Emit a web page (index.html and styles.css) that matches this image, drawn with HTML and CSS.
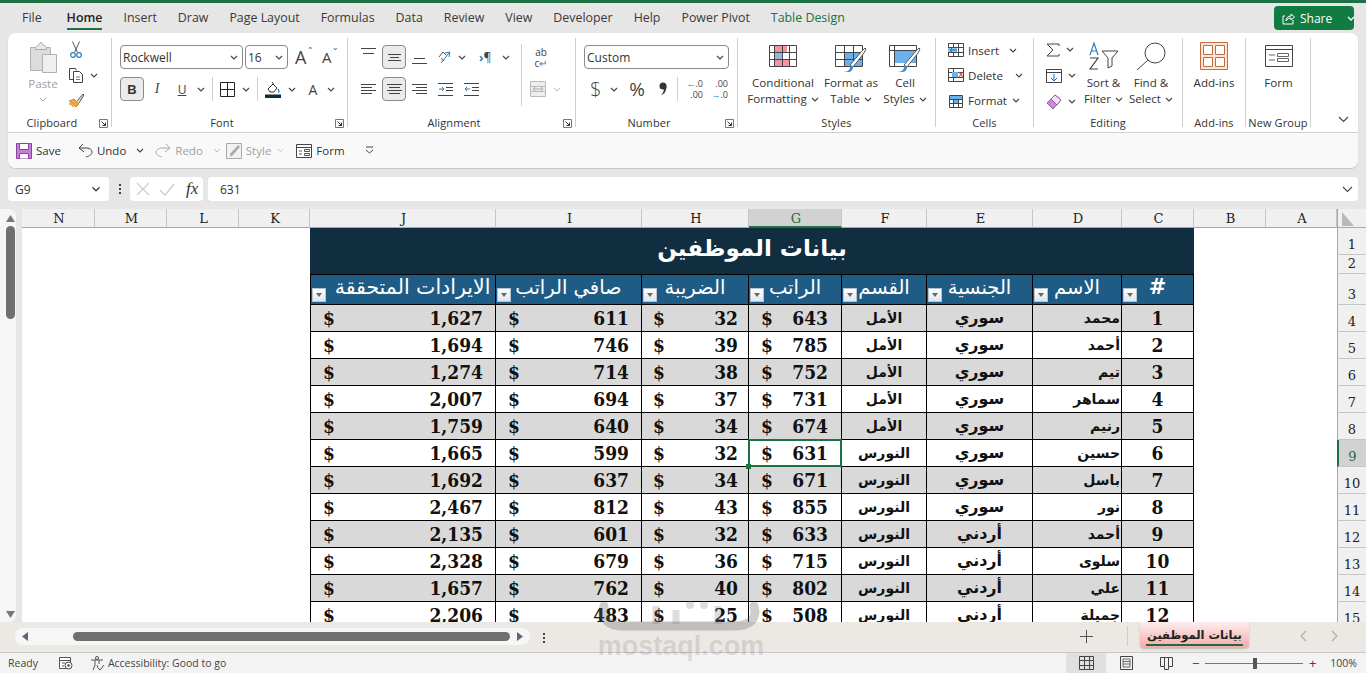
FILE: index.html
```html
<!DOCTYPE html>
<html lang="en">
<head>
<meta charset="utf-8">
<title>Excel</title>
<link rel="stylesheet" href="styles.css">
</head>
<body>
<svg class="defs" aria-hidden="true">
  <symbol id="chev" viewBox="0 0 8 5"><path d="M1 1l3 3 3-3" fill="none" stroke="#444" stroke-width="1.1"/></symbol>
  <symbol id="launch" viewBox="0 0 9 9"><path d="M.5 8.500v-8h8v8z" fill="none" stroke="#777"/><path d="M2.500 2.500l4 4M3.500 6.500h3v-3" fill="none" stroke="#333"/></symbol>
</svg>
<div class="topline"></div>
<header class="tabbar">
  <nav class="tabs">
    <span>File</span><span class="on">Home</span><span>Insert</span><span>Draw</span><span>Page Layout</span><span>Formulas</span><span>Data</span><span>Review</span><span>View</span><span>Developer</span><span>Help</span><span>Power Pivot</span><span class="ctx">Table Design</span>
  </nav>
  <div class="share">
    <svg width="13" height="13" viewBox="0 0 13 13"><path d="M3 4H1v8h10V8M4 9c0-3 2-5 5-5V2l3.500 3L9 8V6C7 6 5 7 4 9z" fill="none" stroke="#fff"/></svg>
    <span>Share</span>
    <svg class="share-chev" width="8" height="5" viewBox="0 0 8 5"><path d="M1 1l3 3 3-3" fill="none" stroke="#fff" stroke-width="1.3"/></svg>
  </div>
</header>

<section class="ribbon">
  <div class="ribbon-main">
    <div class="group g-clip lnch">
      <div class="gbody clip-body">
        <div class="paste">
          <svg width="28" height="31" viewBox="0 0 28 31"><path d="M1.500 5.500h20v23h-20z" fill="#dcdcdc" stroke="#b0b0b0"/><path d="M6.500 5.500l2-2h1l2-3h1l2 3h1l2 2v2h-11z" fill="#e8e8e8" stroke="#aaa"/><path d="M13.500 12.500h14v18h-14z" fill="#efefef" stroke="#b0b0b0"/></svg>
          <span class="dim">Paste</span>
          <svg class="ch" viewBox="0 0 8 5"><path d="M1 1l3 3 3-3" fill="none" stroke="#aaa"/></svg>
        </div>
        <div class="clip-tools">
          <div class="tool tool-cut"><svg width="12" height="17" viewBox="0 0 12 17"><path d="M2.500 .5l5 11M9.500 .5l-5 11" fill="none" stroke="#555"/><circle cx="3" cy="14" r="2.300" fill="none" stroke="#2d7fb8" stroke-width="1.200"/><circle cx="9" cy="14" r="2.300" fill="none" stroke="#2d7fb8" stroke-width="1.200"/></svg></div>
          <div class="tool tool-copy"><svg width="16" height="16" viewBox="0 0 16 16"><path d="M5.500 12.500h-4v-11h6l1 2" fill="none" stroke="#444"/><path d="M5.500 4.500h6l3 3v8h-9z" fill="#fff" stroke="#444"/><path d="M8 10h4M8 12.500h4" stroke="#777"/></svg><svg class="ch" viewBox="0 0 8 5"><use href="#chev"/></svg></div>
          <div class="tool tool-brush"><svg width="17" height="16" viewBox="0 0 17 16"><path d="M1 8l7 6 3-3-5-5z" fill="#f0a63c" stroke="#c77a1a" stroke-width=".8"/><path d="M3 10l-2 1 3 1 1 2 1-1" fill="#f6c26b" stroke="#c77a1a" stroke-width=".6"/><path d="M9 8l6-7 1 1-5 8" fill="#ddd" stroke="#555"/></svg></div>
        </div>
      </div>
      <div class="glabel">Clipboard</div>
      <svg class="launcher" viewBox="0 0 9 9"><use href="#launch"/></svg>
    </div>

    <div class="group g-font lnch">
      <div class="gbody stack">
        <div class="frow font-r1">
          <div class="select sel-font"><span>Rockwell</span><svg class="ch" viewBox="0 0 8 5"><use href="#chev"/></svg></div>
          <div class="select sel-size"><span>16</span><svg class="ch" viewBox="0 0 8 5"><use href="#chev"/></svg></div>
          <div class="bigA">A<i>ˆ</i></div>
          <div class="smallA">A<i>ˇ</i></div>
        </div>
        <div class="frow font-r2">
          <div class="btn-on bold">B</div>
          <div class="fi italic">I</div>
          <div class="fi under">U</div>
          <svg class="ch" viewBox="0 0 8 5"><use href="#chev"/></svg>
          <b class="vsep"></b>
          <svg width="15" height="15" viewBox="0 0 15 15"><path d="M.5.500h14v14H.5zM7.500.500v14M.5 7.500h14" fill="none" stroke="#222"/></svg>
          <svg class="ch" viewBox="0 0 8 5"><use href="#chev"/></svg>
          <b class="vsep"></b>
          <svg width="16" height="17" viewBox="0 0 16 17"><path d="M3 8l5-5 4 4-3 4H5z" fill="#fff" stroke="#333"/><path d="M7 1l2 3" stroke="#333"/><path d="M13 8c1 2 1.500 3 0 3.500" fill="none" stroke="#2d7fb8" stroke-width="1.300"/><path d="M0 13.500h16V17H0z" fill="#0f2d40"/></svg>
          <svg class="ch" viewBox="0 0 8 5"><use href="#chev"/></svg>
          <div class="fi fontA">A</div>
          <svg class="ch" viewBox="0 0 8 5"><use href="#chev"/></svg>
        </div>
      </div>
      <div class="glabel">Font</div>
      <svg class="launcher" viewBox="0 0 9 9"><use href="#launch"/></svg>
    </div>

    <div class="group g-align lnch">
      <div class="gbody stack">
        <div class="frow align-r1">
          <svg class="al" viewBox="0 0 15 13"><path d="M0 .5h15M2 5.500h11" stroke="#444"/></svg>
          <div class="btn-on"><svg class="al" viewBox="0 0 15 13"><path d="M1 3.500h13M3 6.500h9M1 9.500h13" stroke="#444"/></svg></div>
          <svg class="al al-low" viewBox="0 0 15 13"><path d="M2 6.500h11M0 11.500h15" stroke="#444"/></svg>
          <svg width="16" height="14" viewBox="0 0 16 14"><path d="M3 13l8-10" stroke="#2d7fb8"/><path d="M7 3l5-1-1 5" fill="none" stroke="#2d7fb8"/><path d="M1 7l4-5 3 3M3 8l3 3" fill="none" stroke="#555"/></svg>
          <svg class="ch" viewBox="0 0 8 5"><use href="#chev"/></svg>
          <span class="para"><em>›</em>¶</span>
          <svg class="ch" viewBox="0 0 8 5"><use href="#chev"/></svg>
          <b class="vsep tall"></b>
          <div class="wrap"><span>ab</span><span>c<em>↵</em></span></div>
        </div>
        <div class="frow align-r2">
          <svg class="al" viewBox="0 0 15 13"><path d="M0 1.500h15M0 4.500h11M0 7.500h15M0 10.500h11" stroke="#444"/></svg>
          <div class="btn-on"><svg class="al" viewBox="0 0 15 13"><path d="M0 1.500h15M2 4.500h11M0 7.500h15M2 10.500h11" stroke="#444"/></svg></div>
          <svg class="al" viewBox="0 0 15 13"><path d="M0 1.500h15M4 4.500h11M0 7.500h15M4 10.500h11" stroke="#444"/></svg>
          <svg class="al" viewBox="0 0 15 13"><path d="M0 .5h15M8 4.500h7M8 7.500h7M0 12.500h15" stroke="#444"/><path d="M1 6h5M4 4l2 2-2 2" fill="none" stroke="#2d7fb8"/></svg>
          <svg class="al" viewBox="0 0 15 13"><path d="M0 .5h15M8 4.500h7M8 7.500h7M0 12.500h15" stroke="#444"/><path d="M6 6H1M3 4L1 6l2 2" fill="none" stroke="#2d7fb8"/></svg>
          <svg class="merge" width="16" height="16" viewBox="0 0 16 16"><path d="M.5.500h15v15H.5zM.5 5.500h15M.5 10.500h15" fill="#eee" stroke="#bbb"/><path d="M3 8h10M5 6L3 8l2 2M11 6l2 2-2 2" fill="none" stroke="#aaa"/></svg>
          <svg class="ch" viewBox="0 0 8 5"><path d="M1 1l3 3 3-3" fill="none" stroke="#bbb"/></svg>
        </div>
      </div>
      <div class="glabel">Alignment</div>
      <svg class="launcher" viewBox="0 0 9 9"><use href="#launch"/></svg>
    </div>

    <div class="group g-num lnch">
      <div class="gbody stack">
        <div class="frow"><div class="select sel-num"><span>Custom</span><svg class="ch" viewBox="0 0 8 5"><use href="#chev"/></svg></div></div>
        <div class="frow num-r2">
          <span class="dollar">$</span>
          <svg class="ch" viewBox="0 0 8 5"><use href="#chev"/></svg>
          <span class="pct">%</span>
          <svg class="comma" width="8" height="14" viewBox="0 0 8 14"><circle cx="4" cy="4" r="3.500" fill="#333"/><path d="M7.500 4c0 5-2 8-5.500 9.500C4 11 5 9 5 6z" fill="#333"/></svg>
          <b class="vsep"></b>
          <div class="dec"><span><em>←</em>.0</span><span>.00</span></div>
          <div class="dec"><span>.00</span><span><em>→</em>.0</span></div>
        </div>
      </div>
      <div class="glabel">Number</div>
      <svg class="launcher" viewBox="0 0 9 9"><use href="#launch"/></svg>
    </div>

    <div class="group g-styles">
      <div class="gbody bigs">
        <div class="big b-cond low">
          <svg width="28" height="22" viewBox="0 0 28 22"><path d="M5 0h13v7H5z" fill="#f4939b"/><path d="M5 7h9v7H5z" fill="#8db8e8"/><path d="M5 14h15v8H5z" fill="#f4939b"/><path d="M.5.500h27v21H.5zM.5 7.500h27M.5 14.500h27M5.500.500v21M13.500.500v21M20.500.500v21" fill="none" stroke="#444"/></svg>
          <span>Conditional</span><span>Formatting <svg class="ch" viewBox="0 0 8 5"><use href="#chev"/></svg></span>
        </div>
        <div class="big b-fmt low">
          <svg width="32" height="28" viewBox="0 0 32 28"><path d="M10 7h18v14H10z" fill="#6db0ee"/><path d="M.5.500h27v21H.5zM.5 7.500h27M.5 14.500h27M9.500.500v21M18.500.500v21" fill="none" stroke="#444"/><path d="M15 20l12-14 3-3 1 1-2 4-11 14z" fill="#fff" stroke="#555"/><path d="M8 27c3 0 5-1 6-2s1-3 1-5l3 2c0 3-2 5-5 5z" fill="#3f8dcc"/></svg>
          <span>Format as</span><span>Table <svg class="ch" viewBox="0 0 8 5"><use href="#chev"/></svg></span>
        </div>
        <div class="big b-cell low">
          <svg width="32" height="28" viewBox="0 0 32 28"><path d="M5 5h23v13H5z" fill="#6db0ee"/><path d="M.5.500h27v21H.5zM.5 5.500h27M5.500.500v21" fill="none" stroke="#444"/><path d="M15 20l12-14 3-3 1 1-2 4-11 14z" fill="#fff" stroke="#555"/><path d="M8 27c3 0 5-1 6-2s1-3 1-5l3 2c0 3-2 5-5 5z" fill="#3f8dcc"/></svg>
          <span>Cell</span><span>Styles <svg class="ch" viewBox="0 0 8 5"><use href="#chev"/></svg></span>
        </div>
      </div>
      <div class="glabel">Styles</div>
    </div>

    <div class="group g-cells">
      <div class="gbody cells-body">
        <div class="cellrow c-ins"><svg width="16" height="14" viewBox="0 0 16 14"><path d="M.5.500h15v13H.5zM.5 4.500h15M.5 9.500h15M5.500.500v13M10.500.500v13" fill="#fff" stroke="#444"/><path d="M0 5h9v4H0z" fill="#8cc4f0"/><path d="M9 7H2M4 5L2 7l2 2" fill="none" stroke="#1f6fb0"/></svg><span>Insert</span><svg class="ch" viewBox="0 0 8 5"><use href="#chev"/></svg></div>
        <div class="cellrow c-del"><svg width="16" height="14" viewBox="0 0 16 14"><path d="M.5.500h15v13H.5zM.5 4.500h15M.5 9.500h15M5.500.500v13" fill="#fff" stroke="#444"/><path d="M4 4h6v5H4z" fill="#6db0ee"/><path d="M11 4l4 5M15 4l-4 5" stroke="#d8473c" stroke-width="1.200"/></svg><span>Delete</span><svg class="ch" viewBox="0 0 8 5"><use href="#chev"/></svg></div>
        <div class="cellrow c-fmt"><svg width="16" height="16" viewBox="0 0 16 16"><path d="M1.500 3.500h13v12h-13zM1.500 7.500h13M1.500 11.500h13M5.500 3.500v12M10.500 3.500v12" fill="#fff" stroke="#444"/><path d="M2 4h12v3H2zM6 8h4v3H6z" fill="#6db0ee"/></svg><span>Format</span><svg class="ch" viewBox="0 0 8 5"><use href="#chev"/></svg></div>
      </div>
      <div class="glabel">Cells</div>
    </div>

    <div class="group g-edit">
      <div class="gbody edit-body">
        <div class="edit-tools">
          <div class="tool"><svg width="14" height="14" viewBox="0 0 14 14"><path d="M13 3V1H1l6 6-6 6h12v-2" fill="none" stroke="#444"/></svg><svg class="ch" viewBox="0 0 8 5"><use href="#chev"/></svg></div>
          <div class="tool"><svg width="16" height="14" viewBox="0 0 16 14"><path d="M.5.500h15v13H.5zM.5 3.500h15" fill="#fff" stroke="#444"/><path d="M8 5v7M5 9l3 3 3-3" fill="none" stroke="#1f6fb0"/></svg><svg class="ch" viewBox="0 0 8 5"><use href="#chev"/></svg></div>
          <div class="tool"><svg width="16" height="16" viewBox="0 0 16 16"><path d="M1 9l8-8 6 5-8 9z" fill="#c98bd8" stroke="#9a56ad"/><path d="M9 1l6 5-4 5-6-6z" fill="#f1e1f5" stroke="#9a56ad"/></svg><svg class="ch" viewBox="0 0 8 5"><use href="#chev"/></svg></div>
        </div>
        <div class="big b-sort">
          <svg width="32" height="28" viewBox="0 0 32 28"><path d="M2 13L6 1l4 12M3.500 9h5" fill="none" stroke="#2d7fb8" stroke-width="1.200"/><path d="M2 16h8L2 27h8" fill="none" stroke="#444" stroke-width="1.200"/><path d="M14 9h16l-6 7v8l-4 2v-10z" fill="none" stroke="#444"/></svg>
          <span>Sort &amp;</span><span>Filter <svg class="ch" viewBox="0 0 8 5"><use href="#chev"/></svg></span>
        </div>
        <div class="big b-find">
          <svg width="30" height="29" viewBox="0 0 30 29"><circle cx="19" cy="11" r="10" fill="none" stroke="#444"/><path d="M12 18L1 28" stroke="#444"/></svg>
          <span>Find &amp;</span><span>Select <svg class="ch" viewBox="0 0 8 5"><use href="#chev"/></svg></span>
        </div>
      </div>
      <div class="glabel">Editing</div>
    </div>

    <div class="group g-add">
      <div class="gbody bigs">
        <div class="big b-add">
          <svg width="28" height="28" viewBox="0 0 28 28"><path d="M.5.500h27v27H.5z" fill="#fbe5d6" stroke="#c8693a"/><path d="M3.500 3.500h9v9h-9zM15.500 3.500h9v9h-9zM3.500 15.500h9v9h-9zM15.500 15.500h9v9h-9z" fill="#fff" stroke="#c8693a"/></svg>
          <span>Add-ins</span>
        </div>
      </div>
      <div class="glabel">Add-ins</div>
    </div>

    <div class="group g-new">
      <div class="gbody bigs">
        <div class="big b-form low">
          <svg width="28" height="22" viewBox="0 0 28 22"><path d="M.5.500h27v21H.5zM.5 4.500h27" fill="#fff" stroke="#444"/><path d="M4 10h6M4 15h6" stroke="#666"/><path d="M12.500 8.500h11v3h-11zM12.500 13.500h11v3h-11z" fill="#fff" stroke="#666"/></svg>
          <span>Form</span>
        </div>
      </div>
      <div class="glabel">New Group</div>
    </div>

    <svg class="collapse" width="11" height="7" viewBox="0 0 11 7"><path d="M1 1l4.500 4.500L10 1" fill="none" stroke="#444" stroke-width="1.100"/></svg>
  </div>

  <div class="qat">
    <div class="q q-save"><svg width="16" height="16" viewBox="0 0 16 16"><path d="M.5.500h15v15H.5z" fill="#c77fd6" stroke="#8d3fa3"/><path d="M3.500.500h9v6h-9z" fill="#fff" stroke="#8d3fa3"/><path d="M3.500 15.500v-5h9v5" fill="#fff" stroke="#8d3fa3"/></svg><span>Save</span></div>
    <div class="q q-undo"><svg width="15" height="15" viewBox="0 0 15 15"><path d="M5 1L1 5h8c3 0 5 2 5 4 0 2-2 4-6 5M1 5l5 4" fill="none" stroke="#444"/></svg><span>Undo</span><svg class="ch" viewBox="0 0 8 5"><use href="#chev"/></svg></div>
    <div class="q q-redo dim"><svg width="16" height="15" viewBox="0 0 16 15"><path d="M11 1l4 4H7C4 5 1 7 1 9c0 2 2 4 6 5M15 5l-5 4" fill="none" stroke="#aaa"/></svg><span>Redo</span><svg class="ch" viewBox="0 0 8 5"><path d="M1 1l3 3 3-3" fill="none" stroke="#bbb"/></svg></div>
    <div class="q q-style dim"><svg width="16" height="16" viewBox="0 0 16 16"><path d="M.5.500h15v15H.5z" fill="#f2f2f2" stroke="#aaa"/><path d="M5 14l9-10-2-2-8 9z" fill="#aaa"/></svg><span>Style</span><svg class="ch" viewBox="0 0 8 5"><path d="M1 1l3 3 3-3" fill="none" stroke="#bbb"/></svg></div>
    <div class="q q-form"><svg width="16" height="14" viewBox="0 0 16 14"><path d="M.5.500h15v13H.5zM.5 3.500h15" fill="#fff" stroke="#444"/><path d="M3 7h3M3 10h3" stroke="#555"/><path d="M8.500 5.500h5v2h-5zM8.500 9.500h5v2h-5z" fill="#fff" stroke="#555"/></svg><span>Form</span></div>
    <svg class="q-custom" width="9" height="9" viewBox="0 0 9 9"><path d="M1 1h7M1 4l3.500 3L8 4" fill="none" stroke="#444"/></svg>
  </div>
</section>

<section class="formula">
  <div class="namebox"><span>G9</span><svg class="ch" viewBox="0 0 8 5"><use href="#chev"/></svg></div>
  <div class="dots"><i></i><i></i><i></i></div>
  <div class="fbtns">
    <svg width="14" height="14" viewBox="0 0 14 14"><path d="M1 1l12 12M13 1L1 13" stroke="#ccc" stroke-width="1.200"/></svg>
    <svg width="16" height="13" viewBox="0 0 16 13"><path d="M1 7l5 5L15 1" fill="none" stroke="#ccc" stroke-width="1.200"/></svg>
    <span class="fx">fx</span>
  </div>
  <div class="finput"><span>631</span><svg class="fchev" width="11" height="7" viewBox="0 0 11 7"><path d="M1 1l4.500 4.500L10 1" fill="none" stroke="#444" stroke-width="1.100"/></svg></div>
</section>

<main class="workspace">
  <aside class="vscroll">
    <svg width="9" height="7" viewBox="0 0 9 7"><path d="M4.500 0L9 7H0z" fill="#777"/></svg>
    <div class="vthumb"></div>
    <svg class="vdown" width="9" height="7" viewBox="0 0 9 7"><path d="M4.500 7L9 0H0z" fill="#777"/></svg>
  </aside>
  <div class="sheet">
    <div class="ch-h">N</div><div class="ch-h">M</div><div class="ch-h">L</div><div class="ch-h">K</div><div class="ch-h">J</div><div class="ch-h">I</div><div class="ch-h">H</div><div class="ch-h sel">G</div><div class="ch-h">F</div><div class="ch-h">E</div><div class="ch-h">D</div><div class="ch-h">C</div><div class="ch-h">B</div><div class="ch-h">A</div>
    <div class="corner"><svg width="12" height="14" viewBox="0 0 12 14"><path d="M0 0l12 14H0z" fill="#b9b9b9"/></svg></div>

    <div class="blank-l"></div>
    <div class="blank-r"></div>
    <div class="title" dir="rtl">بيانات الموظفين</div>
    <div class="rh r1">1</div>
    <div class="rh r2">2</div>

    <div class="th first"><i class="flt"></i><span dir="rtl">الايرادات المتحققة</span></div>
    <div class="th"><i class="flt"></i><span dir="rtl">صافي الراتب</span></div>
    <div class="th"><i class="flt"></i><span dir="rtl">الضريبة</span></div>
    <div class="th"><i class="flt"></i><span dir="rtl">الراتب</span></div>
    <div class="th"><i class="flt"></i><span dir="rtl">القسم</span></div>
    <div class="th"><i class="flt"></i><span dir="rtl">الجنسية</span></div>
    <div class="th"><i class="flt"></i><span dir="rtl">الاسم</span></div>
    <div class="th hash"><i class="flt"></i><span>#</span></div>
    <div class="rh">3</div>

    <div class="c alt first n-j"><span>$</span><span>1,627</span></div><div class="c alt n-i"><span>$</span><span>611</span></div><div class="c alt n-h"><span>$</span><span>32</span></div><div class="c alt n-g"><span>$</span><span>643</span></div><div class="c alt dept" dir="rtl">الأمل</div><div class="c alt nat" dir="rtl">سوري</div><div class="c alt name" dir="rtl">محمد</div><div class="c alt idx">1</div><div class="rh">4</div>
    <div class="c first n-j"><span>$</span><span>1,694</span></div><div class="c n-i"><span>$</span><span>746</span></div><div class="c n-h"><span>$</span><span>39</span></div><div class="c n-g"><span>$</span><span>785</span></div><div class="c dept" dir="rtl">الأمل</div><div class="c nat" dir="rtl">سوري</div><div class="c name" dir="rtl">أحمد</div><div class="c idx">2</div><div class="rh">5</div>
    <div class="c alt first n-j"><span>$</span><span>1,274</span></div><div class="c alt n-i"><span>$</span><span>714</span></div><div class="c alt n-h"><span>$</span><span>38</span></div><div class="c alt n-g"><span>$</span><span>752</span></div><div class="c alt dept" dir="rtl">الأمل</div><div class="c alt nat" dir="rtl">سوري</div><div class="c alt name" dir="rtl">تيم</div><div class="c alt idx">3</div><div class="rh">6</div>
    <div class="c first n-j"><span>$</span><span>2,007</span></div><div class="c n-i"><span>$</span><span>694</span></div><div class="c n-h"><span>$</span><span>37</span></div><div class="c n-g"><span>$</span><span>731</span></div><div class="c dept" dir="rtl">الأمل</div><div class="c nat" dir="rtl">سوري</div><div class="c name" dir="rtl">سماهر</div><div class="c idx">4</div><div class="rh">7</div>
    <div class="c alt first n-j"><span>$</span><span>1,759</span></div><div class="c alt n-i"><span>$</span><span>640</span></div><div class="c alt n-h"><span>$</span><span>34</span></div><div class="c alt n-g"><span>$</span><span>674</span></div><div class="c alt dept" dir="rtl">الأمل</div><div class="c alt nat" dir="rtl">سوري</div><div class="c alt name" dir="rtl">رنيم</div><div class="c alt idx">5</div><div class="rh">8</div>
    <div class="c first n-j"><span>$</span><span>1,665</span></div><div class="c n-i"><span>$</span><span>599</span></div><div class="c n-h"><span>$</span><span>32</span></div><div class="c n-g active"><span>$</span><span>631</span></div><div class="c dept" dir="rtl">النورس</div><div class="c nat" dir="rtl">سوري</div><div class="c name" dir="rtl">حسين</div><div class="c idx">6</div><div class="rh sel">9</div>
    <div class="c alt first n-j"><span>$</span><span>1,692</span></div><div class="c alt n-i"><span>$</span><span>637</span></div><div class="c alt n-h"><span>$</span><span>34</span></div><div class="c alt n-g"><span>$</span><span>671</span></div><div class="c alt dept" dir="rtl">النورس</div><div class="c alt nat" dir="rtl">سوري</div><div class="c alt name" dir="rtl">باسل</div><div class="c alt idx">7</div><div class="rh">10</div>
    <div class="c first n-j"><span>$</span><span>2,467</span></div><div class="c n-i"><span>$</span><span>812</span></div><div class="c n-h"><span>$</span><span>43</span></div><div class="c n-g"><span>$</span><span>855</span></div><div class="c dept" dir="rtl">النورس</div><div class="c nat" dir="rtl">سوري</div><div class="c name" dir="rtl">نور</div><div class="c idx">8</div><div class="rh">11</div>
    <div class="c alt first n-j"><span>$</span><span>2,135</span></div><div class="c alt n-i"><span>$</span><span>601</span></div><div class="c alt n-h"><span>$</span><span>32</span></div><div class="c alt n-g"><span>$</span><span>633</span></div><div class="c alt dept" dir="rtl">النورس</div><div class="c alt nat" dir="rtl">أردني</div><div class="c alt name" dir="rtl">أحمد</div><div class="c alt idx">9</div><div class="rh">12</div>
    <div class="c first n-j"><span>$</span><span>2,328</span></div><div class="c n-i"><span>$</span><span>679</span></div><div class="c n-h"><span>$</span><span>36</span></div><div class="c n-g"><span>$</span><span>715</span></div><div class="c dept" dir="rtl">النورس</div><div class="c nat" dir="rtl">أردني</div><div class="c name" dir="rtl">سلوى</div><div class="c idx">10</div><div class="rh">13</div>
    <div class="c alt first n-j"><span>$</span><span>1,657</span></div><div class="c alt n-i"><span>$</span><span>762</span></div><div class="c alt n-h"><span>$</span><span>40</span></div><div class="c alt n-g"><span>$</span><span>802</span></div><div class="c alt dept" dir="rtl">النورس</div><div class="c alt nat" dir="rtl">أردني</div><div class="c alt name" dir="rtl">علي</div><div class="c alt idx">11</div><div class="rh">14</div>
    <div class="c first n-j"><span>$</span><span>2,206</span></div><div class="c n-i"><span>$</span><span>483</span></div><div class="c n-h"><span>$</span><span>25</span></div><div class="c n-g"><span>$</span><span>508</span></div><div class="c dept" dir="rtl">النورس</div><div class="c nat" dir="rtl">أردني</div><div class="c name" dir="rtl">جميلة</div><div class="c idx">12</div><div class="rh">15</div>
  </div>
</main>

<section class="sheetbar">
  <div class="hscroll">
    <svg width="6" height="9" viewBox="0 0 6 9"><path d="M0 4.500L6 0v9z" fill="#666"/></svg>
    <div class="hthumb"></div>
    <svg width="6" height="9" viewBox="0 0 6 9"><path d="M6 4.500L0 0v9z" fill="#666"/></svg>
  </div>
  <div class="dots sb-dots"><i></i><i></i><i></i></div>
  <svg class="plus" width="13" height="13" viewBox="0 0 13 13"><path d="M6.500 0v13M0 6.500h13" stroke="#555"/></svg>
  <b class="tabsep"></b>
  <div class="sheettab" dir="rtl"><span>بيانات الموظفين</span></div>
  <div class="sbnav">
    <svg width="8" height="12" viewBox="0 0 8 12"><path d="M7 1L2 6l5 5" fill="none" stroke="#aaa" stroke-width="1.100"/></svg>
    <svg width="8" height="12" viewBox="0 0 8 12"><path d="M1 1l5 5-5 5" fill="none" stroke="#aaa" stroke-width="1.100"/></svg>
  </div>
</section>

<footer class="status">
  <span class="ready">Ready</span>
  <svg class="st-ic" width="14" height="13" viewBox="0 0 14 13"><path d="M.5.500h11v11H.5zM.5 3.500h11M3 6h3M3 9h2" fill="#fff" stroke="#555"/><circle cx="9.500" cy="8.500" r="3.500" fill="#fff" stroke="#444"/><circle cx="9.500" cy="8.500" r="1.300" fill="#444"/></svg>
  <svg class="st-acc" width="15" height="15" viewBox="0 0 15 15"><circle cx="7" cy="2" r="1.500" fill="none" stroke="#555"/><path d="M1 4h12M5 4v5l-2 5M9 4v4M7 9l1 3 2 2 4-5" fill="none" stroke="#555"/></svg>
  <span class="acc">Accessibility: Good to go</span>
  <div class="views">
    <div class="view on"><svg width="15" height="14" viewBox="0 0 15 14"><path d="M.5.500h14v13H.5zM.5 4.500h14M.5 9.500h14M5.500.500v13M10.500.500v13" fill="none" stroke="#444"/></svg></div>
    <div class="view"><svg width="13" height="14" viewBox="0 0 13 14"><path d="M.5.500h12v13H.5z" fill="none" stroke="#444"/><path d="M3 3h7v8H3zM3 5.500h7M3 8h7" fill="none" stroke="#666"/></svg></div>
    <div class="view"><svg width="13" height="13" viewBox="0 0 13 13"><path d="M.5.500h12v9H8.500v3h-4v-3H.5zM4.500.500v9M8.500.500v9" fill="none" stroke="#444"/></svg></div>
  </div>
  <div class="zoomctl">
    <span class="zm">−</span>
    <div class="slider"><i></i></div>
    <span class="zm">+</span>
    <span class="pc">100%</span>
  </div>
</footer>

<div class="watermark">
  <svg width="170" height="34" viewBox="0 0 170 34"><path d="M8 8c-4 14 6 20 20 20h110c14 0 24-6 20-20" fill="none" stroke="#666" stroke-opacity=".32" stroke-width="9" stroke-linecap="round"/><circle cx="94" cy="7" r="4" fill="#777" fill-opacity=".25"/><circle cx="108" cy="7" r="4" fill="#777" fill-opacity=".25"/><path d="M60 26V8M80 26V12M122 26V8" stroke="#777" stroke-opacity=".25" stroke-width="7"/></svg>
  <span>mostaql.com</span>
</div>
</body>
</html>
```

FILE: styles.css
```css
* { box-sizing: border-box; }
html, body { margin: 0; height: 673px; overflow: hidden; }
body {
  position: relative;
  background: #e6e6e6;
  color: #333;
  font-family: "Open Sans", "Liberation Sans", sans-serif;
  font-size: 12px;
  display: flex;
  flex-direction: column;
}
.defs { display: none; }
svg { display: block; flex: none; }
.ch { width: 8px; height: 5px; display: inline-block; }
i, em, b { font-style: normal; }
.dim { color: #a0a0a0; }

.topline { height: 3px; background: #1d7145; }

/* tab strip */
.tabbar { height: 30px; display: flex; justify-content: space-between; align-items: center; padding: 0 12px 0 22px; }
.tabs { display: flex; gap: 21px; font-size: 12.400px; color: #3a3a3a; }
.tabs span { height: 30px; line-height: 30px; position: relative; white-space: nowrap; }
.tabs .on { color: #222; font-weight: 600; margin-left: 4px; }
.tabs .on::after { content: ""; position: absolute; left: 0; right: 0; bottom: 3px; height: 2px; background: #1d7145; }
.tabs .ctx { color: #1d7145; }
.share { width: 80px; height: 24px; background: #107c41; border-radius: 4px; color: #fff; display: flex; align-items: center; padding-left: 8px; gap: 5px; }
.share-chev { margin-left: 10px; }

/* ribbon */
.ribbon { margin: 0 8px; height: 135px; background: #fff; border-radius: 8px; box-shadow: 0 1px 1px #c4c4c4; display: flex; flex-direction: column; overflow: hidden; flex: none; }
.ribbon-main { height: 100px; display: flex; padding-top: 5px; border-bottom: 1px solid #d0d0d0; position: relative; }
.group { height: 89px; border-right: 1px solid #cfcfcf; position: relative; display: flex; flex-direction: column; flex: none; }
.gbody { height: 78px; flex: none; }
.glabel { text-align: center; font-size: 11px; line-height: 14px; color: #333; white-space: nowrap; letter-spacing: .1px; }
.lnch .glabel { padding-right: 15px; }
.launcher { position: absolute; width: 9px; height: 9px; right: 3px; bottom: -1px; }
.collapse { position: absolute; left: 1330px; top: 83px; }

.g-clip { width: 104px; }
.g-font { width: 236px; }
.g-align { width: 228px; }
.g-num { width: 162px; }
.g-styles { width: 198px; }
.g-cells { width: 98px; }
.g-edit { width: 149px; }
.g-add { width: 63px; }
.g-new { width: 65px; }

.clip-body { display: flex; padding: 4px 0 0 21px; }
.paste { width: 28px; display: flex; flex-direction: column; align-items: center; }
.paste span { margin-top: 3px; line-height: 16px; font-size: 11.500px; }
.paste .ch { margin-top: 5px; }
.clip-tools { display: flex; flex-direction: column; margin-left: 11px; gap: 10px; }
.tool { display: flex; align-items: center; gap: 6px; }
.tool-cut { margin-left: 2px; height: 16px; margin-top: -1px; }
.tool-copy { height: 16px; }
.tool-brush { height: 16px; }

.stack { padding: 7px 0 0 8px; display: flex; flex-direction: column; gap: 8px; }
.frow { display: flex; align-items: center; height: 24px; }
.select { height: 24px; border: 1px solid #8a8a8a; border-radius: 4px; display: flex; align-items: center; justify-content: space-between; padding: 0 4px 0 2px; color: #333; background: #fff; }
.sel-font { width: 123px; }
.sel-size { width: 43px; margin-left: 2px; }
.sel-num { width: 145px; }
.bigA { margin-left: 7px; width: 20px; font-size: 18px; color: #444; position: relative; }
.smallA { margin-left: 7px; width: 20px; font-size: 15px; color: #444; position: relative; }
.bigA i, .smallA i { position: absolute; left: 13px; top: -1px; font-size: 11px; color: #2d7fb8; }
.smallA i { left: 11px; top: -2px; }
.btn-on { width: 24px; height: 24px; background: #ebebeb; border: 1px solid #8a8a8a; border-radius: 4px; display: flex; align-items: center; justify-content: center; flex: none; }
.bold { font-family: "Liberation Sans", sans-serif; font-weight: 700; font-size: 13px; color: #333; }
.fi { text-align: center; flex: none; color: #444; }
.italic { width: 14px; margin-left: 6px; font-family: "Liberation Serif", serif; font-style: italic; font-size: 14px; }
.under { width: 12px; margin-left: 12px; text-decoration: underline; font-size: 12px; }
.font-r2 > .under + .ch { margin-left: 9px; }
.vsep { width: 1px; height: 24px; background: #d0d0d0; flex: none; }
.font-r2 > .vsep { margin: 0 7px; }
.font-r2 > svg + .ch { margin-left: 7px; }
.fontA { width: 14px; margin-left: 10px; font-size: 14px; }
.font-r2 > .fontA + .ch { margin-left: 7px; }

.al { width: 15px; height: 13px; flex: none; }
.al-low { margin-top: 2px; }
.align-r1 .btn-on, .align-r2 .btn-on { margin: 0 6px; }
.align-r1 > svg:first-child, .align-r2 > svg:first-child { margin-left: 5px; }
.align-r1 > .al:first-child { margin-top: -6px; }
.align-r1 > .al-low + svg { margin-left: 11px; }
.align-r1 > svg + .ch { margin-left: 4px; }
.para { margin-left: 13px; width: 16px; font-size: 12px; color: #444; white-space: nowrap; }
.para em { color: #2d7fb8; font-weight: 700; }
.para + .ch { margin-left: 7px; }
.align-r1 .vsep.tall { height: 62px; margin: -1px 9px 0 11px; align-self: flex-start; }
.wrap { width: 20px; display: flex; flex-direction: column; align-items: center; line-height: 11px; font-size: 10px; color: #444; margin-top: 1px; }
.wrap em { color: #2d7fb8; font-size: 10px; }
.align-r2 > .al + .al { margin-left: 11px; }
.merge { margin-left: 51px; }
.merge + .ch { margin-left: 7px; }

.num-r2 { padding-left: 6px; }
.dollar { font-size: 20px; width: 10px; color: #444; font-weight: 300; }
.num-r2 .ch { margin-left: 10px; }
.pct { font-size: 19px; margin-left: 8px; width: 22px; color: #444; text-align: center; }
.comma { margin: 0 4px 0 11px; }
.num-r2 .vsep { margin: 0 4px 0 6px; }
.dec { display: flex; flex-direction: column; font-size: 9px; line-height: 11px; width: 21px; margin-right: 4px; text-align: right; color: #444; white-space: nowrap; }
.dec em { color: #2d7fb8; font-size: 9px; }

.bigs { display: flex; padding-top: 4px; }
.big { display: grid; grid-template-rows: 33px 16px 16px; justify-items: center; line-height: 16px; white-space: nowrap; flex: none; font-size: 11.600px; }
.low > svg { margin-top: 3px; }
.big span .ch { margin-left: 1px; vertical-align: 1px; }
.b-cond { width: 72px; margin-left: 9px; }
.b-fmt { width: 64px; }
.b-cell { width: 44px; }
.b-add { width: 62px; }
.b-form { width: 65px; }
.b-sort { width: 49px; }
.b-find { width: 46px; }

.cells-body { display: flex; flex-direction: column; padding: 4px 0 0 12px; gap: 9px; }
.cellrow { display: flex; align-items: center; gap: 4px; height: 16px; font-size: 11.600px; }
.c-ins .ch { margin-left: 6px; }
.c-del .ch { margin-left: 8px; }
.c-fmt .ch { margin-left: 1px; }
.edit-body { display: flex; padding: 4px 0 0 12px; }
.edit-tools { display: flex; flex-direction: column; width: 33px; gap: 11px; }
.edit-tools .tool { height: 15px; gap: 6px; }

/* quick access */
.qat { flex: 1; background: #f9f9f9; display: flex; align-items: center; padding: 0 0 0 8px; }
.q { display: flex; align-items: center; gap: 4px; white-space: nowrap; font-size: 11.500px; }
.q-undo { margin-left: 17px; }
.q-undo .ch { margin-left: 6px; }
.q-redo { margin-left: 11px; }
.q-redo .ch { margin-left: 6px; }
.q-style { margin-left: 5px; }
.q-style .ch { margin-left: 2px; width: 7px; }
.q-form { margin-left: 12px; }
.q-custom { margin-left: 20px; }

/* formula bar */
.formula { height: 24px; margin: 9px 8px 8px; display: flex; flex: none; }
.namebox { width: 101px; background: #fff; border-radius: 4px; display: flex; align-items: center; justify-content: space-between; padding: 0 8px 0 7px; }
.namebox .ch { width: 10px; height: 6px; }
.dots { display: flex; flex-direction: column; gap: 2px; align-items: center; justify-content: center; width: 21px; }
.dots i { width: 2px; height: 2px; background: #444; }
.fbtns { width: 73px; background: #fff; border-radius: 4px; display: flex; align-items: center; padding-left: 6px; gap: 9px; }
.fx { font-family: "Liberation Serif", serif; font-style: italic; font-size: 17px; color: #333; margin-left: 2px; }
.finput { flex: 1; background: #fff; border-radius: 4px; margin-left: 5px; display: flex; align-items: center; justify-content: space-between; padding: 0 5px 0 12px; }

/* grid */
.workspace { height: 413px; display: flex; flex: none; background: #fff; }
.vscroll { width: 22px; background: #e6e6e6; flex: none; display: flex; flex-direction: column; align-items: center; padding: 6px 2px 0 0; position: relative; }
.vscroll::before { content: ""; position: absolute; inset: 0 6px 0 0; background: #f6f6f6; border-radius: 0 7px 7px 0; }
.vscroll svg, .vthumb { position: relative; }
.vthumb { width: 9px; height: 93px; background: #707070; border-radius: 5px; margin-top: 4px; }
.vdown { margin-top: auto; margin-bottom: 4px; }
.sheet {
  flex: 1;
  display: grid;
  grid-template-columns: 73px 72px 72px 71px 186px 146px 107px 93px 85px 106px 89px 72px 72px 71px 29px;
  grid-template-rows: 19px 27px 19px 31px repeat(12, 27px);
  overflow: hidden;
  position: relative;
  font-family: "DejaVu Serif", serif;
}
.ch-h { background: #f0f0f0; border-right: 1px solid #c6c6c6; border-bottom: 1px solid #a8a8a8; text-align: center; font-size: 13px; line-height: 20px; color: #222; overflow: hidden; padding-left: 2px; }
.ch-h.sel { background: #d2d2d2; color: #1d6b42; border-bottom: 2px solid #1d7145; }
.corner { background: #f0f0f0; border-bottom: 1px solid #a8a8a8; padding: 3px 0 0 4px; border-left: 1px solid #a8a8a8; }
.blank-l { grid-column: 1 / 5; grid-row: 2 / 17; background: #fff; }
.blank-r { grid-column: 13 / 15; grid-row: 2 / 17; background: #fff; }
.title { grid-column: 5 / 13; grid-row: 2 / 4; background: #112d40; color: #fff; font: 700 23px/41px "DejaVu Sans", sans-serif; text-align: center; }
.rh { grid-column: 15; background: #f0f0f0; border-left: 1px solid #a8a8a8; border-bottom: 1px solid #c6c6c6; text-align: center; font-size: 13px; line-height: 16px; color: #222; display: flex; align-items: flex-end; justify-content: center; padding-bottom: 1px; }
.rh.sel { background: #d2d2d2; color: #1d6b42; border-left: 2px solid #1d7145; }
.th { background: #1f5c85; border-right: 1px solid #000; border-bottom: 1px solid #000; border-top: 1px solid #000; color: #fff; font: 400 19.500px/1 "DejaVu Sans", sans-serif; display: flex; justify-content: center; align-items: center; white-space: nowrap; overflow: hidden; position: relative; }
.th.first, .c.first { border-left: 1px solid #000; }
.th.first { padding: 0 3px 0 22px; font-size: 20.500px; }
.th span { margin-top: -4px; }
.th.hash { font-size: 21px; font-weight: 700; }
.flt { position: absolute; left: 1px; bottom: 2px; width: 14px; height: 14px; background: linear-gradient(#fff, #dfe6ee); border: 1px solid #b7c4cf; }
.flt::after { content: ""; position: absolute; left: 3px; top: 4px; border: 3.500px solid transparent; border-top: 4px solid #666; border-bottom: 0; }
.c { background: #fff; border-right: 1px solid #000; border-bottom: 1px solid #000; color: #111; font: 700 19px/26px "DejaVu Serif Condensed", "DejaVu Serif", serif; font-stretch: condensed; display: flex; align-items: center; justify-content: space-between; white-space: nowrap; overflow: hidden; }
.c.alt { background: #d9d9d9; }
.n-j, .n-i { padding: 0 12px; }
.n-h { padding: 0 10px 0 11px; }
.n-g { padding: 0 13px 0 12px; }
.dept, .nat, .name { font-family: "DejaVu Sans", sans-serif; font-stretch: normal; font-size: 14px; }
.dept, .nat { justify-content: center; }
.nat { font-size: 16px; }
.name { justify-content: flex-start; padding-right: 1px; }
.idx { justify-content: center; }
.c.active { overflow: visible; position: relative; }
.c.active::before { content: ""; position: absolute; inset: -1px; border: 2px solid #1d7145; z-index: 2; }
.c.active::after { content: ""; position: absolute; left: -3px; bottom: -3px; width: 5px; height: 5px; background: #1d7145; z-index: 3; }

/* sheet tabs */
.sheetbar { height: 31px; background: #ece8e4; border-bottom: 1px solid #c8c8c8; display: flex; align-items: flex-start; flex: none; position: relative; z-index: 1; }
.hscroll { width: 515px; height: 17px; margin: 6px 0 0 15px; background: #f6f6f6; border-radius: 8px; display: flex; align-items: center; padding: 0 7px; justify-content: space-between; }
.hthumb { width: 438px; height: 9px; background: #707070; border-radius: 5px; margin-left: 45px; margin-right: 7px; }
.sb-dots { width: 28px; height: 31px; }
.plus { margin: 8px 0 0 522px; }
.tabsep { width: 1px; height: 20px; background: #ccc; margin: 4px 0 0 34px; }
.sheettab { width: 109px; height: 26px; margin-left: 12px; background: linear-gradient(#fdeeee, #f5a9a9); border-radius: 0 0 4px 4px; box-shadow: 0 1px 2px #bbb; text-align: center; font: 700 11.500px/26px "DejaVu Sans", sans-serif; color: #222; position: relative; white-space: nowrap; }
.sheettab::after { content: ""; position: absolute; left: 6px; right: 6px; bottom: 2px; height: 2px; background: #1d6b42; }
.sbnav { display: flex; gap: 24px; margin: 8px 0 0 50px; }

/* status */
.status { height: 20px; background: #f3f3f3; display: flex; align-items: center; padding: 0 9px 0 8px; font-size: 10.500px; color: #444; flex: none; position: relative; z-index: 1; white-space: nowrap; }
.st-ic { margin-left: 21px; }
.st-acc { margin-left: 17px; }
.acc { margin-left: 3px; }
.views { display: flex; margin: 0 4px 0 auto; height: 20px; }
.view { width: 40px; height: 20px; display: flex; align-items: center; justify-content: center; }
.view.on { background: #e0e0e0; }
.zoomctl { display: flex; align-items: center; }
.zm { width: 11px; text-align: center; font-size: 13px; color: #444; }
.slider { width: 98px; height: 1px; background: #777; margin: 0 4px; position: relative; }
.slider i { position: absolute; left: 48px; top: -5px; width: 4px; height: 11px; background: #555; }
.pc { margin-left: 12px; }

.watermark { position: absolute; left: 596px; top: 598px; width: 170px; display: flex; flex-direction: column; align-items: center; z-index: 5; pointer-events: none; }
.watermark span { font: 700 27px/28px "Liberation Sans", sans-serif; color: rgba(110,110,110,.2); }
```
